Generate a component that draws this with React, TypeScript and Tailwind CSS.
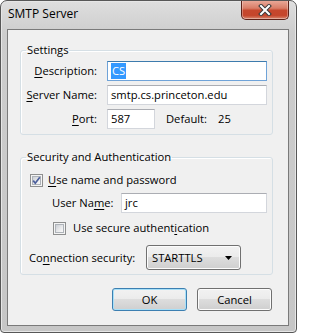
import React from "react";

const face =
  "bg-[linear-gradient(#f2f2f2_0%,#ebebeb_50%,#dddddd_50%,#cfcfcf_100%)]";

function U({ children }: { children: React.ReactNode }) {
  return (
    <span className="underline decoration-[1px] underline-offset-[2px]">
      {children}
    </span>
  );
}

function TextBox({
  className,
  focused,
  children,
}: {
  className: string;
  focused?: boolean;
  children?: React.ReactNode;
}) {
  return (
    <div
      className={`h-[20px] bg-white border flex items-center pl-[3px] whitespace-nowrap ${
        focused
          ? "border-[#6fa3d8] border-t-[#3d7bad]"
          : "border-[#d3d6dc] border-t-[#abadb3]"
      } ${className}`}
    >
      {children}
    </div>
  );
}

function CheckBox({ checked }: { checked?: boolean }) {
  return (
    <div className="relative w-[13px] h-[13px] shrink-0 border border-[#8e8f8f] bg-[#f4f4f4] p-[1px]">
      <div className="w-full h-full border border-[#aeb3b9] bg-[linear-gradient(135deg,#cbcfd5_0%,#e6e7e9_50%,#fafafa_100%)]" />
      {checked && (
        <svg
          className="absolute left-0 top-0"
          width="11"
          height="11"
          viewBox="0 0 11 11"
        >
          <path
            d="M2.2 5.6 L4.3 8.2 L8.8 2.3"
            fill="none"
            stroke="#4b5f9c"
            strokeWidth="1.7"
          />
        </svg>
      )}
    </div>
  );
}

function CloseButton() {
  return (
    <div className="ml-auto mr-[7px] w-[48px] h-[19px] rounded-b-[5px] border border-t-0 border-[#5d2219] bg-[linear-gradient(#e9a796_0%,#d97d67_40%,#c6472d_52%,#c5452b_80%,#d8876f_100%)] shadow-[inset_0_-1px_0_rgba(255,255,255,0.35),inset_1px_0_0_rgba(255,255,255,0.3),inset_-1px_0_0_rgba(255,255,255,0.3)] flex items-center justify-center">
      <svg width="14" height="12" viewBox="0 0 14 12">
        <path
          d="M3 2 L11 10 M11 2 L3 10"
          stroke="#3a3a3a"
          strokeWidth="4"
          strokeLinecap="square"
        />
        <path
          d="M3 2 L11 10 M11 2 L3 10"
          stroke="#ffffff"
          strokeWidth="2"
          strokeLinecap="square"
        />
      </svg>
    </div>
  );
}

function Button({
  children,
  isDefault,
}: {
  children: React.ReactNode;
  isDefault?: boolean;
}) {
  return (
    <div
      className={`w-[75px] h-[23px] rounded-[3px] border flex items-center justify-center ${face} ${
        isDefault
          ? "border-[#3c7fb1] shadow-[inset_0_0_0_1px_#a7e0f8]"
          : "border-[#707070] shadow-[inset_0_0_0_1px_#fcfcfc]"
      }`}
    >
      {children}
    </div>
  );
}

export default function App() {
  return (
    <div className="w-[297px] h-[333px] bg-white font-['Open_Sans',sans-serif] text-[11.2px] leading-[16px] text-black">
      <div className="w-full h-full flex flex-col rounded-t-[7px] rounded-b-[4px] border border-[#575757] bg-[linear-gradient(#dedede_0%,#cdcdcd_10%,#c6c6c6_100%)] shadow-[inset_0_0_0_1px_#e6e6e6]">
        <div className="h-[28px] flex items-start">
          <div className="pl-[7px] pt-[5px] text-[12px] leading-[16px]">
            SMTP Server
          </div>
          <CloseButton />
        </div>
        <div className="ml-[6px] mr-[7px] mb-[6px] flex-1 border border-[#7a7a7a] bg-[#f0f0f0] flex flex-col">
          {/* Settings */}
          <fieldset className="ml-[12px] mt-[12px] w-[253px] border border-[#d5dfe5] rounded-[3px] pb-[5px] shadow-[inset_1px_1px_0_#fff]">
            <legend className="ml-[5px] px-[1px] leading-[16px]">
              Settings
            </legend>
            <div className="mt-[3px] grid grid-cols-[76px_160px] gap-x-[10px] gap-y-[4px]">
              <div className="h-[20px] flex items-center justify-end">
                <span>
                  <U>D</U>escription:
                </span>
              </div>
              <TextBox className="w-[160px]" focused>
                <span className="bg-[#3399ff] text-white px-[1px] leading-[16px]">
                  CS
                </span>
              </TextBox>
              <div className="h-[20px] flex items-center justify-end">
                <span>
                  <U>S</U>erver Name:
                </span>
              </div>
              <TextBox className="w-[160px]">smtp.cs.princeton.edu</TextBox>
              <div className="h-[20px] flex items-center justify-end">
                <span>
                  <U>P</U>ort:
                </span>
              </div>
              <div className="flex items-center">
                <TextBox className="w-[48px]">587</TextBox>
                <span className="ml-[11px] w-[52px]">Default:</span>
                <span>25</span>
              </div>
            </div>
          </fieldset>

          {/* Security */}
          <fieldset className="ml-[12px] mt-[14px] w-[253px] border border-[#d5dfe5] rounded-[3px] pb-[4px] shadow-[inset_1px_1px_0_#fff]">
            <legend className="ml-[5px] px-[1px] leading-[16px]">
              Security and Authentication
            </legend>
            <div className="mt-[7px] h-[16px] pl-[9px] flex items-center gap-[5px]">
              <CheckBox checked />
              <span>
                <U>U</U>se name and password
              </span>
            </div>
            <div className="mt-[5px] pl-[31px] flex items-center">
              <span className="w-[69px]">
                User Na<U>m</U>e:
              </span>
              <TextBox className="w-[146px]">jrc</TextBox>
            </div>
            <div className="mt-[7px] h-[16px] pl-[32px] flex items-center gap-[7px]">
              <CheckBox />
              <span>
                Use secure authent<U>i</U>cation
              </span>
            </div>
            <div className="mt-[9px] pl-[8px] flex items-center">
              <span className="w-[117px]">
                Co<U>n</U>nection security:
              </span>
              <div
                className={`w-[95px] h-[25px] rounded-[3px] border border-[#707070] shadow-[inset_0_0_0_1px_#fcfcfc] ${face} flex items-center pl-[5px] pr-[8px]`}
              >
                <span>STARTTLS</span>
                <svg
                  className="ml-auto"
                  width="7"
                  height="4"
                  viewBox="0 0 7 4"
                >
                  <polygon points="0,0 7,0 3.5,4" fill="#000" />
                </svg>
              </div>
            </div>
          </fieldset>

          {/* Buttons */}
          <div className="mt-[13px] mr-[16px] flex justify-end gap-[10px]">
            <Button isDefault>OK</Button>
            <Button>Cancel</Button>
          </div>
        </div>
      </div>
    </div>
  );
}
